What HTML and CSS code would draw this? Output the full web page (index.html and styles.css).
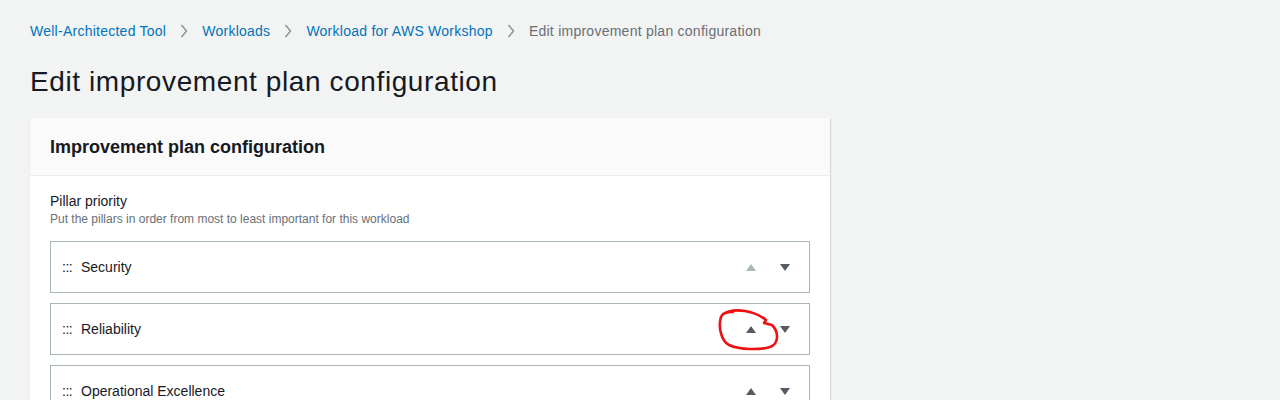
FILE: index.html
```html
<!DOCTYPE html>
<html>
<head>
<meta charset="utf-8">
<link rel="stylesheet" href="styles.css">
</head>
<body>
<div class="page">
  <nav class="crumbs">
    <a class="crumb">Well-Architected Tool</a>
    <svg class="chev" viewBox="0 0 8 14" width="8" height="14"><path d="M1.5 1 L6.5 7 L1.5 13" fill="none" stroke="#879596" stroke-width="1.5"/></svg>
    <a class="crumb">Workloads</a>
    <svg class="chev" viewBox="0 0 8 14" width="8" height="14"><path d="M1.5 1 L6.5 7 L1.5 13" fill="none" stroke="#879596" stroke-width="1.5"/></svg>
    <a class="crumb">Workload for AWS Workshop</a>
    <svg class="chev" viewBox="0 0 8 14" width="8" height="14"><path d="M1.5 1 L6.5 7 L1.5 13" fill="none" stroke="#879596" stroke-width="1.5"/></svg>
    <span class="crumb current">Edit improvement plan configuration</span>
  </nav>
  <h1 class="title">Edit improvement plan configuration</h1>
  <section class="card">
    <header class="card-head">Improvement plan configuration</header>
    <div class="card-body">
      <div class="label">Pillar priority</div>
      <div class="desc">Put the pillars in order from most to least important for this workload</div>
      <ul class="pillars">
        <li class="pillar">
          <span class="grip">:::</span><span class="name">Security</span>
          <span class="arrows">
            <svg class="arrow" viewBox="0 0 10 7" width="10" height="7"><path d="M5 0 L10 7 L0 7 Z" fill="#aab7b8"/></svg>
            <svg class="arrow" viewBox="0 0 10 7" width="10" height="7"><path d="M0 0 L10 0 L5 7 Z" fill="#545b64"/></svg>
          </span>
        </li>
        <li class="pillar">
          <span class="grip">:::</span><span class="name">Reliability</span>
          <span class="arrows">
            <svg class="arrow" viewBox="0 0 10 7" width="10" height="7"><path d="M5 0 L10 7 L0 7 Z" fill="#545b64"/></svg>
            <svg class="arrow" viewBox="0 0 10 7" width="10" height="7"><path d="M0 0 L10 0 L5 7 Z" fill="#545b64"/></svg>
          </span>
          <svg class="mark" viewBox="0 0 70 50" width="70" height="50"><path d="M8 10 C20 3, 40 7, 51 16 L49 19 L57 21 C64 28, 64 40, 55 43 C45 46, 25 46, 14 41 C6 37, 3 22, 6 13 C7 10, 12 8, 18 8" fill="none" stroke="#ee1111" stroke-width="2.6" stroke-linecap="round" stroke-linejoin="round"/></svg>
        </li>
        <li class="pillar">
          <span class="grip">:::</span><span class="name">Operational Excellence</span>
          <span class="arrows">
            <svg class="arrow" viewBox="0 0 10 7" width="10" height="7"><path d="M5 0 L10 7 L0 7 Z" fill="#545b64"/></svg>
            <svg class="arrow" viewBox="0 0 10 7" width="10" height="7"><path d="M0 0 L10 0 L5 7 Z" fill="#545b64"/></svg>
          </span>
        </li>
      </ul>
    </div>
  </section>
</div>
</body>
</html>
```
FILE: styles.css
```css
html, body {
  margin: 0;
  padding: 0;
  background: #f2f3f3;
  font-family: "Liberation Sans", Arial, sans-serif;
  color: #16191f;
}
.page {
  padding: 20px 30px 0 30px;
}
.crumbs {
  display: flex;
  align-items: center;
  height: 22px;
  font-size: 14px;
  letter-spacing: 0.25px;
}
.crumb {
  color: #0073bb;
  text-decoration: none;
}
.crumb.current {
  color: #687078;
}
.chev {
  margin: 0 14px 0 14px;
}
.title {
  margin: 22px 0 0 0;
  font-size: 28px;
  font-weight: 400;
  line-height: 36px;
  letter-spacing: 0.6px;
  color: #16191f;
}
.card {
  margin-top: 18px;
  width: 800px;
  background: #fff;
  box-shadow: 0 1px 1px 0 rgba(0, 28, 36, 0.15), 1px 1px 1px 0 rgba(0, 28, 36, 0.1);
}
.card-head {
  height: 58px;
  box-sizing: border-box;
  padding: 2px 20px 0 20px;
  display: flex;
  align-items: center;
  background: #fafafa;
  border-bottom: 1px solid #eaeded;
  font-size: 18px;
  font-weight: 700;
}
.card-body {
  padding: 15px 20px 20px 20px;
}
.label {
  font-size: 14px;
  line-height: 20px;
}
.desc {
  font-size: 12px;
  line-height: 16px;
  color: #687078;
}
.pillars {
  list-style: none;
  margin: 14px 0 0 0;
  padding: 0;
  display: flex;
  flex-direction: column;
  gap: 10px;
}
.pillar {
  position: relative;
  height: 52px;
  box-sizing: border-box;
  border: 1px solid #aab7b8;
  display: flex;
  align-items: center;
  padding: 0 19px 0 11px;
  font-size: 14px;
}
.grip {
  width: 19px;
  color: #16191f;
  letter-spacing: -0.5px;
}
.name {
  flex: 1;
}
.arrows {
  display: flex;
  align-items: center;
  gap: 24px;
}
.arrow {
  display: block;
}
.mark {
  position: absolute;
  left: 664px;
  top: 0;
}
```
